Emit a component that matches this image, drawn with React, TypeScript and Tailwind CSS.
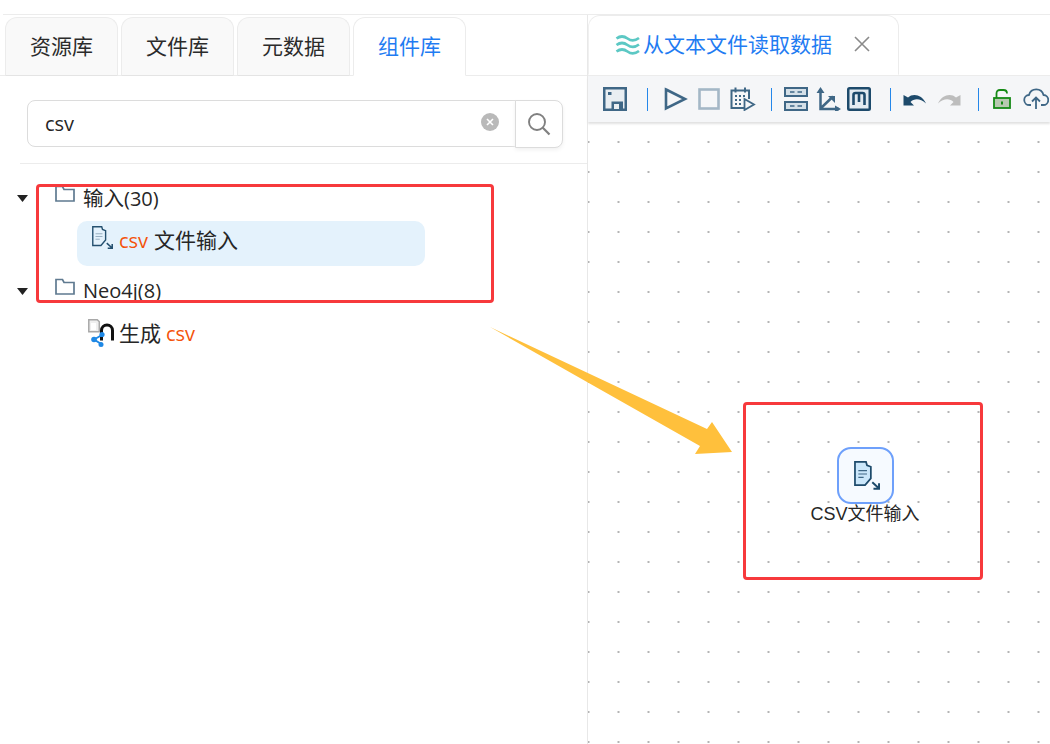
import React from "react";

const FONT = "font-['Open_Sans','Noto_Sans_CJK_SC',sans-serif]";

function Sep({ cls }: { cls: string }) {
  return <div className={`w-px h-[23px] bg-[#2487ea] shrink-0 ${cls}`} />;
}

function FileArrow({ w, fill = "none", stroke = "#24506f", line = "#6e8ca3" }: { w: number; fill?: string; stroke?: string; line?: string }) {
  return (
    <svg width={w} height={w * 30 / 27} viewBox="0 0 27 30" className="shrink-0">
      <path d="M1 1h11.500l1 3.500 4 1.500v12l-6 7H1z" fill={fill} stroke={stroke} strokeWidth="1.800" />
      <path d="M4.500 10h9M4.500 13.500h9M4.500 17h5.500" stroke={line} strokeWidth="1.100" fill="none" />
      <path d="M19 22l6.500 6M26 23v5.800h-5.800" stroke={stroke} strokeWidth="2" fill="none" />
    </svg>
  );
}

function Folder() {
  return (
    <svg width="20" height="17" viewBox="0 0 20 17" className="shrink-0">
      <path d="M1 16V1.500h6.500L9 4.500h10V16z" fill="#fff" stroke="#5f7a90" strokeWidth="1.700" />
    </svg>
  );
}

function Caret() {
  return (
    <svg width="11" height="7" viewBox="0 0 11 7" className="shrink-0">
      <path d="M0 0h11L5.500 7z" fill="#222" />
    </svg>
  );
}

const C = "#3f6786";

function Toolbar() {
  return (
    <div className="flex items-center h-[46px] bg-[#f5f6f8] shadow-[0_2px_2px_#e2e2e2] pl-[15px] overflow-hidden">
      <svg width="24" height="24" viewBox="0 0 24 24" className="shrink-0">
        <path d="M0 0h24v24H0z" fill={C} />
        <path d="M2.500 2.500h19v19h-1.500V14.500H8.500v7h-6z" fill="#e9eef2" />
        <path d="M11 17h5v5h-5z" fill="#e9eef2" />
        <rect x="5" y="5" width="3.500" height="3" fill={C} />
      </svg>
      <Sep cls="ml-[20px]" />
      <svg width="24" height="24" viewBox="0 0 24 24" className="shrink-0 ml-[16px]">
        <path d="M2 2.500 21 12 2 21.500z" fill="none" stroke={C} strokeWidth="2.600" />
      </svg>
      <svg width="22" height="22" viewBox="0 0 22 22" className="shrink-0 ml-[10px]">
        <rect x="1.500" y="1.500" width="19" height="19" fill="none" stroke="#a4b7c6" strokeWidth="2.600" />
      </svg>
      <svg width="26" height="24" viewBox="0 0 26 24" className="shrink-0 ml-[10px]">
        <path d="M14 21H1.500V3.500H19V12" fill="none" stroke={C} strokeWidth="2" />
        <path d="M5.500 0.500v5M15 0.500v5" stroke={C} strokeWidth="2" fill="none" />
        <path d="M5 8h2v2H5zM9 8h2v2H9zM13 8h2v2h-2zM5 12h2v2H5zM9 12h2v2H9zM5 16h2v2H5zM9 16h2v2H9z" fill={C} />
        <path d="M14.500 12 24 17.500 14.500 23z" fill="#f5f6f8" stroke={C} strokeWidth="1.800" />
      </svg>
      <Sep cls="ml-[15px]" />
      <svg width="24" height="24" viewBox="0 0 24 24" className="shrink-0 ml-[12px]">
        <path d="M0 0h24v10H0zM0 14h24v10H0z" fill={C} />
        <path d="M2 2h20v6H2zM2 16h20v6H2z" fill="#d5e0e8" />
        <path d="M6 5h4.500M13.500 5H18M6 19h4.500M13.500 19H18" stroke={C} strokeWidth="1.500" />
      </svg>
      <svg width="25" height="24" viewBox="0 0 25 24" className="shrink-0 ml-[8px]">
        <path d="M4.500 2v20H23M4.500 21.500 17 9.500" fill="none" stroke={C} strokeWidth="2.500" />
        <path d="M4.500 0 .5 6h8zM25 22l-6-3.500v7z" fill={C} />
        <path d="M12 9h7v7z" fill={C} />
      </svg>
      <svg width="24" height="24" viewBox="0 0 24 24" className="shrink-0 ml-[6px]">
        <rect x="0" y="0" width="24" height="24" rx="2.500" fill="#1d4a6b" />
        <rect x="2.500" y="2.500" width="19" height="19" fill="#e3ebf1" />
        <path d="M6.500 18V8q0-2 2-2h7q2 0 2 2v10M12 6v9" fill="none" stroke="#1d4a6b" strokeWidth="2.600" />
      </svg>
      <Sep cls="ml-[19px]" />
      <svg width="24" height="16" viewBox="0 0 24 16" className="shrink-0 ml-[12px]">
        <path d="M.5 4v10.500H11L7.500 11C11 7.500 17 7 23 12.500 19 3.500 10 2 5 6.500z" fill="#1d4a6b" />
      </svg>
      <svg width="24" height="16" viewBox="0 0 24 16" className="shrink-0 ml-[10px]">
        <path d="M23.500 4v10.500H13L16.500 11C13 7.500 7 7 1 12.500 5 3.500 14 2 19 6.500z" fill="#bdbdbd" />
      </svg>
      <Sep cls="ml-[17px]" />
      <svg width="18" height="20" viewBox="0 0 18 20" className="shrink-0 ml-[14px]">
        <path d="M3.500 9V4.500Q3.500 1 7 1h3.500Q14 1 14 4.500" fill="none" stroke="#168a16" strokeWidth="1.800" />
        <rect x="1" y="9" width="16" height="10" fill="#b7c9b0" stroke="#168a16" strokeWidth="1.800" />
        <rect x="8" y="12.500" width="2" height="3" fill="#168a16" />
      </svg>
      <svg width="26" height="22" viewBox="0 0 26 22" className="shrink-0 ml-[12px]">
        <path d="M8 17H6.500a5 5 0 0 1-.5-10 7.500 7.500 0 0 1 14.500 0 5 5 0 0 1-.5 10h-2" fill="none" stroke={C} strokeWidth="1.800" />
        <path d="M13 21V10M9 13.500 13 9.500l4 4" fill="none" stroke={C} strokeWidth="1.800" />
      </svg>
    </div>
  );
}

function Tab({ label, active }: { label: string; active?: boolean }) {
  return (
    <div
      className={
        "w-[113px] h-[59px] -mb-px shrink-0 flex items-center justify-center rounded-t-[12px] border border-[#ececec] text-[21px] " +
        (active ? "bg-white border-b-white text-[#1f7cf2]" : "bg-[#f9f9f9] border-b-[#e4e4e4] text-[#2b2b2b]")
      }
    >
      {label}
    </div>
  );
}

export default function App() {
  return (
    <div className={`relative w-[1050px] h-[744px] overflow-hidden bg-white ${FONT} text-[#262626]`}>
      <div className="h-[15px] ml-[3px] border-b border-[#ececec]" />
      <div className="flex h-[729px]">
        {/* left panel */}
        <div className="w-[588px] shrink-0 border-r border-[#e8e8e8]">
          <div className="h-[61px] flex items-end gap-[3px] pl-[5px] border-b border-[#ececec]">
            <Tab label="资源库" />
            <Tab label="文件库" />
            <Tab label="元数据" />
            <Tab label="组件库" active />
          </div>
          <div className="ml-[27px] mt-[24px] w-[536px] h-[48px] flex">
            <div className="flex-1 h-[47px] flex items-center justify-between border border-[#dcdcdc] rounded-l-[8px] pl-[17px] pr-[16px] text-[20px]">
              <span className="mt-px">csv</span>
              <svg width="18" height="18" viewBox="0 0 18 18" className="-mt-[4px]">
                <circle cx="9" cy="9" r="9" fill="#b9b9b9" />
                <path d="M6 6l6 6M12 6l-6 6" stroke="#fff" strokeWidth="1.600" />
              </svg>
            </div>
            <div className="w-[48px] h-[48px] flex items-center justify-center border border-[#dcdcdc] rounded-r-[8px] -ml-[1px] shadow-[0_2px_4px_#f1f1f1] bg-white">
              <svg width="24" height="24" viewBox="0 0 24 24" className="-mt-[1px] -ml-[1px]">
                <circle cx="10" cy="10" r="8" fill="none" stroke="#808080" strokeWidth="1.900" />
                <path d="M15.800 15.800 22.500 22.500" stroke="#808080" strokeWidth="2.200" />
              </svg>
            </div>
          </div>
          <div className="ml-[20px] mt-[15px] border-t border-[#ececec]" />
          {/* tree */}
          <div className="pt-[20px] text-[20px] leading-[28px]">
            <div className="flex items-center h-[28px] pl-[17px]">
              <Caret />
              <div className="ml-[27px] -mt-[9px]"><Folder /></div>
              <span className="ml-[8px]"><span className="text-[20.500px]">输入</span>(30)</span>
            </div>
            <div className="ml-[77px] mt-[9px] w-[348px] h-[45px] bg-[#e4f2fc] rounded-[10px] flex items-start pl-[15px] pt-[5px]">
              <FileArrow w={21} line="#8ba3b6" />
              <span className="ml-[6px] mt-[1px] text-[#f4530a]">csv</span>
              <span className="ml-[6px] text-[21px]">文件输入</span>
            </div>
            <div className="flex items-center h-[28px] mt-[11px] pl-[17px]">
              <Caret />
              <div className="ml-[27px] -mt-[9px]"><Folder /></div>
              <span className="ml-[8px]">Neo4j(8)</span>
            </div>
            <div className="flex items-center h-[32px] mt-[12px] pl-[88px]">
              <svg width="28" height="28" viewBox="0 0 28 28" className="shrink-0 -mt-[1px]">
                <path d="M.8.800h8.500l2 2v10H.8z" fill="#efefef" stroke="#a8a8a8" strokeWidth="1.500" />
                <path d="M3 4h5v7H3z" fill="#fff" />
                <path d="M13.500 21.500v-10a5.500 5.500 0 0 1 11 0v10" fill="none" stroke="#111" strokeWidth="3" />
                <path d="M6 20.500 14 16M6 20.500 14 25.500" stroke="#1e88e5" strokeWidth="2" />
                <circle cx="6" cy="20.500" r="2.800" fill="#1e88e5" />
                <circle cx="14" cy="15.500" r="2.600" fill="#1e88e5" />
                <circle cx="13" cy="25.500" r="2.500" fill="#1e88e5" />
              </svg>
              <span className="ml-[3px] text-[21px]">生成</span>
              <span className="ml-[5px] mt-[1px] text-[#f4530a]">csv</span>
            </div>
          </div>
        </div>

        {/* right panel */}
        <div className="flex-1 flex flex-col min-w-0">
          <div className="h-[61px] shrink-0 border-b border-[#ececec]">
            <div className="w-[311px] h-[60px] bg-white border border-[#ececec] border-b-white border-l-[#f0f0f0] rounded-t-[12px] flex items-center pl-[26px] text-[21px] text-[#1f7cf2]">
              <svg width="26" height="22" viewBox="0 0 26 22" className="shrink-0">
                <path d="M1.500 4.500q5.500-4 11 0t11.500-.5M1.500 11q5.500-4 11 0t11.500-.5M1.500 17.500q5.500-4 11 0t11.500-.5" fill="none" stroke="#5cc8c4" strokeWidth="2.700" />
              </svg>
              <span className="ml-[2px]">从文本文件读取数据</span>
              <svg width="16" height="16" viewBox="0 0 16 16" className="ml-[22px] -mt-[3px]">
                <path d="M1 1l14 14M15 1 1 15" stroke="#8a8a8a" strokeWidth="1.600" />
              </svg>
            </div>
          </div>
          <Toolbar />
          <div className="relative flex-1 bg-[radial-gradient(circle,#b4b4b4_0.8px,transparent_1.1px)] bg-[size:30px_30px] bg-[position:-14.500px_5px]">
            {/* node on the canvas */}
            <div className="absolute left-[222px] top-[325px] w-[110px] flex flex-col items-center">
              <div className="w-[57px] h-[57px] rounded-[14px] border-2 border-[#6ea0fb] bg-[#f6faff] flex items-center justify-center pl-[3px]">
                <FileArrow w={26} fill="#cbe7fb" stroke="#1d4a6b" line="#3f6786" />
              </div>
              <div className="text-[18px] leading-[20px] whitespace-nowrap font-['Liberation_Sans','Noto_Sans_CJK_SC',sans-serif]">CSV文件输入</div>
            </div>
          </div>
        </div>
      </div>

      {/* annotations */}
      <div className="absolute left-[36px] top-[184px] w-[458px] h-[119px] border-[3px] border-[#f7393c] rounded-[4px]" />
      <div className="absolute left-[743px] top-[402px] w-[240px] h-[178px] border-[3px] border-[#f7393c] rounded-[4px]" />
      <svg width="260" height="140" viewBox="0 0 260 140" className="absolute left-[490px] top-[325px]">
        <path d="M0 2 217 104 222 97 242 127 205 129 210 121z" fill="#ffc03c" />
      </svg>
    </div>
  );
}
